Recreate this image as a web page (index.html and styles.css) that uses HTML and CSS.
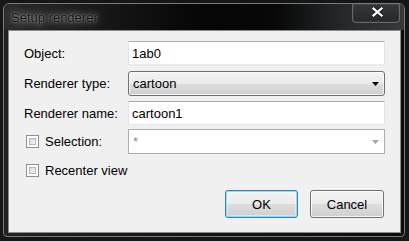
FILE: index.html
```html
<!DOCTYPE html>
<html lang="en">
<head>
  <meta charset="UTF-8">
  <meta name="viewport" content="width=device-width, initial-scale=1.0">
  <title>Setup renderer</title>
  <link rel="stylesheet" href="styles.css">
</head>
<body>
  <div class="window">
    <div class="titlebar">
      <span class="title">Setup renderer</span>
      <button class="close" title="Close">
        <svg width="11" height="10" viewBox="0 0 11 10">
          <path d="M1.5 1.5 L9.5 8.5 M9.5 1.5 L1.5 8.5" stroke="#1a1a1a" stroke-width="4" stroke-linecap="square"/>
          <path d="M1.5 1.5 L9.5 8.5 M9.5 1.5 L1.5 8.5" stroke="#ffffff" stroke-width="2.2" stroke-linecap="square"/>
        </svg>
      </button>
    </div>

    <div class="client">
      <div class="row row-1">
        <span class="label">Object:</span>
        <input class="field text" type="text" value="1ab0">
      </div>

      <div class="row row-2">
        <span class="label">Renderer type:</span>
        <div class="field select">
          <span>cartoon</span>
          <svg class="arrow" width="7" height="4" viewBox="0 0 7 4"><path d="M0 0 H7 L3.5 4 Z" fill="#000"/></svg>
        </div>
      </div>

      <div class="row row-3">
        <span class="label">Renderer name:</span>
        <input class="field text" type="text" value="cartoon1">
      </div>

      <div class="row row-4">
        <span class="label check-label"><span class="check"></span>Selection:</span>
        <div class="field combo">
          <span class="star">*</span>
          <svg class="arrow" width="7" height="4" viewBox="0 0 7 4"><path d="M0 0 H7 L3.5 4 Z" fill="#a6a6a6"/></svg>
        </div>
      </div>

      <div class="row row-5">
        <span class="check-label"><span class="check"></span>Recenter view</span>
      </div>

      <div class="buttons">
        <button class="btn btn-default">OK</button>
        <button class="btn">Cancel</button>
      </div>
    </div>
  </div>
</body>
</html>
```

FILE: styles.css
```css
body {
  margin: 0;
  padding: 3px;
  background: #161616;
  font-family: "Liberation Sans", Arial, sans-serif;
  font-size: 13px;
  color: #000;
}

.window {
  width: 402px;
  height: 234px;
  box-sizing: border-box;
  border: 1px solid #7a7a7a;
  border-radius: 6px 6px 4px 4px;
  background: linear-gradient(to right, #222 0%, #161616 40%, #0c0c0c 100%);
  display: flex;
  flex-direction: column;
  overflow: hidden;
}

/* glass title bar */
.titlebar {
  height: 26px;
  display: flex;
  align-items: center;
  flex: none;
  background: linear-gradient(to right, #2c2c2c 0%, #151515 28%, #050505 50%, #080808 68%, #26292b 85%, #36393c 100%);
}

.title {
  padding-left: 7px;
  color: #111;
  text-shadow: 0 0 2px rgba(255, 255, 255, 0.6), 0 0 9px rgba(255, 255, 255, 0.45), 0 0 14px rgba(255, 255, 255, 0.35);
}

.close {
  align-self: flex-start;
  margin-left: auto;
  margin-right: 4px;
  width: 48px;
  height: 19px;
  padding: 0;
  border: 1px solid #65686b;
  border-top: none;
  border-radius: 0 0 4px 4px;
  background: linear-gradient(#34373a, #26282a);
  box-shadow: inset 0 0 0 1px rgba(255, 255, 255, 0.06);
  display: flex;
  align-items: center;
  justify-content: center;
  padding-bottom: 2px;
}

.close svg {
  display: block;
  margin-left: 2px;
}

/* dialog body */
.client {
  flex: 1;
  margin: 0 3px 3px 4px;
  border: 1px solid #8a8a8a;
  background: #f0f0f0;
  padding: 10px 15px 0 15px;
}

.row {
  display: flex;
  align-items: center;
  height: 24px;
}

.row-1 { margin-bottom: 6px; }
.row-2 { height: 25px; margin-bottom: 5px; }
.row-3 { margin-bottom: 4px; }
.row-4 { height: 25px; margin-bottom: 4px; }

.label {
  width: 104px;
  flex: none;
  white-space: nowrap;
}

.field {
  width: 257px;
  height: 100%;
  box-sizing: border-box;
  margin: 0;
}

.text {
  font: inherit;
  color: #000;
  background: #fff;
  border: 1px solid #e2e3ea;
  border-top-color: #abadb3;
  border-bottom-color: #e3e9ef;
  padding: 0 3px;
  outline: none;
}

.select {
  display: flex;
  align-items: center;
  padding-left: 4px;
  border: 1px solid #707070;
  border-radius: 3px;
  background: linear-gradient(#f2f2f2 0%, #ebebeb 50%, #dddddd 51%, #cfcfcf 100%);
  box-shadow: inset 0 0 0 1px rgba(255, 255, 255, 0.7);
}

.arrow {
  margin-left: auto;
  margin-right: 5px;
  flex: none;
}

.combo {
  display: flex;
  align-items: center;
  padding-left: 4px;
  border: 1px solid #abadb3;
  background: #fff;
}

.star {
  color: #8a8f99;
  align-self: flex-start;
  margin-top: 4px;
}

.check-label {
  display: flex;
  align-items: center;
  white-space: nowrap;
}

.check {
  width: 13px;
  height: 13px;
  box-sizing: border-box;
  margin: 0 6px 0 2px;
  border: 1px solid #8e8f8f;
  padding: 2px;
  background: #fff;
}

.check::before {
  content: "";
  display: block;
  width: 100%;
  height: 100%;
  box-sizing: border-box;
  border: 1px solid #b3b6bb;
  background: linear-gradient(135deg, #d6d9dd, #f5f5f5);
}

.buttons {
  display: flex;
  justify-content: flex-end;
  gap: 12px;
  margin-top: 8px;
  margin-right: 1px;
}

.btn {
  width: 74px;
  height: 28px;
  padding: 0;
  font: inherit;
  color: #000;
  border: 1px solid #707070;
  border-radius: 3px;
  background: linear-gradient(#f2f2f2 0%, #ebebeb 50%, #dddddd 51%, #cfcfcf 100%);
  box-shadow: inset 0 0 0 1px rgba(255, 255, 255, 0.75);
}

.btn-default {
  width: 73px;
  border-color: #3c7fb1;
  box-shadow: inset 0 0 0 1px #7ee3fb, inset 0 0 0 2px rgba(255, 255, 255, 0.4);
}
```
